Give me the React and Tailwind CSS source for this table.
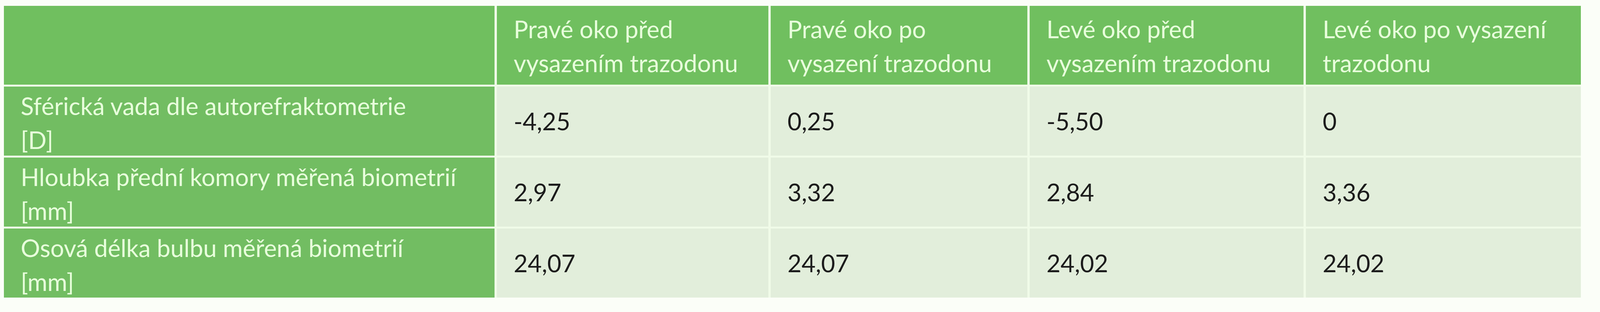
import React from 'react';

const headers = [
  ['Pravé oko před', 'vysazením trazodonu'],
  ['Pravé oko po', 'vysazení trazodonu'],
  ['Levé oko před', 'vysazením trazodonu'],
  ['Levé oko po vysazení', 'trazodonu'],
];

const rows = [
  { label: ['Sférická vada dle autorefraktometrie', '[D]'], values: ['-4,25', '0,25', '-5,50', '0'] },
  { label: ['Hloubka přední komory měřená biometrií', '[mm]'], values: ['2,97', '3,32', '2,84', '3,36'] },
  { label: ['Osová délka bulbu měřená biometrií', '[mm]'], values: ['24,07', '24,07', '24,02', '24,02'] },
];

function App() {
  return (
    <div className="min-h-[800px] w-[4109px] bg-[#fbfef8] pt-[15px] pl-[10px] font-['Lato','Liberation_Sans',sans-serif] text-[62px] leading-[87px]">
      <div className="grid grid-cols-[1256px_695px_657px_701px_704px] grid-rows-[202px_177px_177px_177px] gap-x-[6px] gap-y-[5px] bg-[#f0fbe8] w-fit">
        <div className="bg-[#70bf5f]" />
        {headers.map((h, i) => (
          <div key={i} className="bg-[#70bf5f] px-[43px] pt-[3px] flex flex-col justify-center text-[#e8ffdc] whitespace-nowrap">
            <span>{h[0]}</span>
            <span>{h[1]}</span>
          </div>
        ))}

        {rows.map((r, ri) => (
          <React.Fragment key={ri}>
            <div className="bg-[#72bd62] px-[43px] pt-[8px] flex flex-col justify-center text-[#e8ffdc] whitespace-nowrap overflow-hidden">
              <span>{r.label[0]}</span>
              <span>{r.label[1]}</span>
            </div>
            {r.values.map((v, vi) => (
              <div key={vi} className="bg-[#e2eedb] px-[43px] flex items-center text-[#1c1c1c]">
                {v}
              </div>
            ))}
          </React.Fragment>
        ))}
      </div>
    </div>
  );
}

export default App;
